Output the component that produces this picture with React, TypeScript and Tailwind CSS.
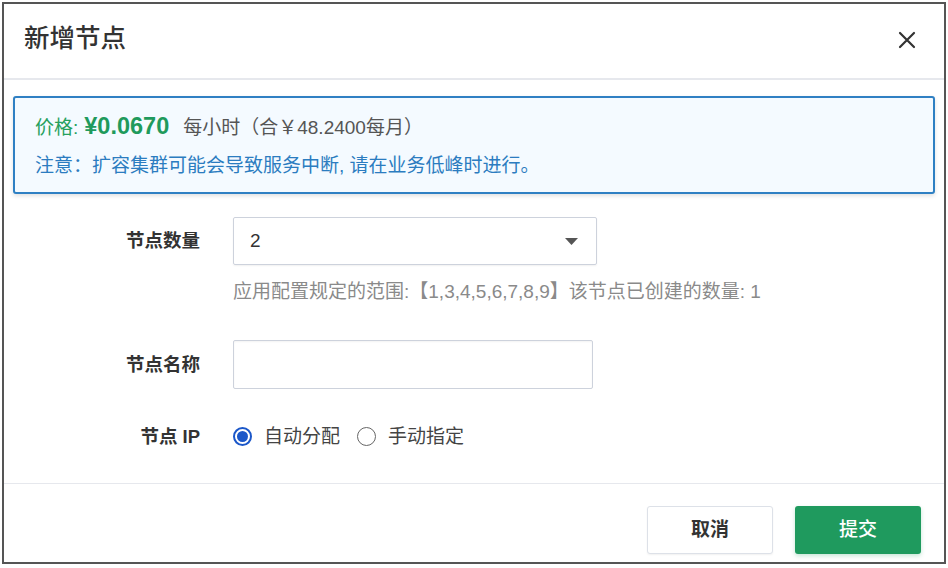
import type { FC } from "react";

const font = {
  fontFamily: '"Liberation Sans", "Noto Sans CJK SC", sans-serif',
};

const Radio: FC<{ checked?: boolean; label: string }> = ({ checked, label }) => {
  return (
    <label className="flex items-center gap-[12px]">
      {checked ? (
        <span className="flex h-[19px] w-[19px] items-center justify-center rounded-full border-2 border-[#1b57c9]">
          <span className="h-[11px] w-[11px] rounded-full bg-[#1b57c9]" />
        </span>
      ) : (
        <span className="h-[19px] w-[19px] rounded-full border-[1.5px] border-[#666]" />
      )}
      <span className="text-[19px] leading-[26px] text-[#444]">{label}</span>
    </label>
  );
};

const FormRow: FC<{ label: string; children: React.ReactNode; className?: string }> = ({
  label,
  children,
  className,
}) => {
  return (
    <div className={"flex items-center " + (className ?? "")}>
      <div className="w-[196px] shrink-0 text-right text-[18.5px] font-semibold text-[#333]">
        {label}
      </div>
      <div className="ml-[33px] flex-1">{children}</div>
    </div>
  );
};

export default function App() {
  return (
    <div className="h-[568px] w-full bg-white p-[2px]" style={font}>
      <div className="flex h-[562px] flex-col border-2 border-[#555] bg-white">
        <div className="flex h-[76px] items-start justify-between border-b-2 border-[#e6e8ed] pl-[20px] pr-[27px] pt-[18px]">
          <h2 className="text-[25.5px] font-medium leading-[32px] text-[#333]">新增节点</h2>
          <svg width="20" height="20" viewBox="0 0 20 20" className="mt-[8px]">
            <path d="M3 3 L17 17 M17 3 L3 17" stroke="#333" strokeWidth="2.2" strokeLinecap="round" />
          </svg>
        </div>

        <div className="mx-[9px] mt-[16px] rounded-[3px] border-2 border-[#2f80c3] bg-[#f4faff] pb-[13px] pl-[20px] pt-[15px] shadow-[0_2px_4px_rgba(0,0,0,0.12)]">
          <p className="flex items-baseline text-[19px] leading-[26px]">
            <span className="text-[#26a05d]">价格:</span>
            <span className="ml-[6px] text-[23.5px] font-bold text-[#1f9a5c]">¥0.0670</span>
            <span className="ml-[14px] text-[#555]">每小时（合￥48.2400每月）</span>
          </p>
          <p className="mt-[12px] text-[19px] leading-[26px] text-[#2b7cc0]">
            注意：扩容集群可能会导致服务中断, 请在业务低峰时进行。
          </p>
        </div>

        <FormRow label="节点数量" className="mt-[23px]">
          <div className="flex h-[48px] w-[364px] items-center justify-between rounded-[2px] border border-[#cdd2dc] pl-[16px] pr-[18px] shadow-[0_1px_2px_rgba(0,0,0,0.06)]">
            <span className="text-[19px] text-[#333]">2</span>
            <svg width="13" height="7" viewBox="0 0 13 7">
              <path d="M0 0 L13 0 L6.5 7 Z" fill="#555" />
            </svg>
          </div>
        </FormRow>
        <p className="ml-[229px] mt-[14px] text-[19px] leading-[26px] text-[#8a8a8a]">
          应用配置规定的范围:【1,3,4,5,6,7,8,9】该节点已创建的数量: 1
        </p>

        <FormRow label="节点名称" className="mt-[35px]">
          <div className="h-[49px] w-[360px] rounded-[2px] border border-[#cdd2dc] bg-white shadow-[inset_0_1px_2px_rgba(0,0,0,0.05)]" />
        </FormRow>

        <FormRow label="节点 IP" className="mt-[34px]">
          <div className="flex items-center gap-[17px]">
            <Radio checked label="自动分配" />
            <Radio label="手动指定" />
          </div>
        </FormRow>

        <div className="flex-1" />

        <div className="flex justify-end gap-[22px] border-t border-[#e6e8ed] pb-[8px] pr-[23px] pt-[22px]">
          <button className="h-[48px] w-[126px] rounded-[3px] border border-[#dde1e8] bg-white text-[19px] font-semibold text-[#333] shadow-[0_1px_2px_rgba(0,0,0,0.06)]">
            取消
          </button>
          <button className="h-[48px] w-[126px] rounded-[3px] bg-[#1f9a5e] text-[19px] font-medium text-white shadow-[0_2px_4px_rgba(31,154,94,0.25)]">
            提交
          </button>
        </div>
      </div>
    </div>
  );
}
